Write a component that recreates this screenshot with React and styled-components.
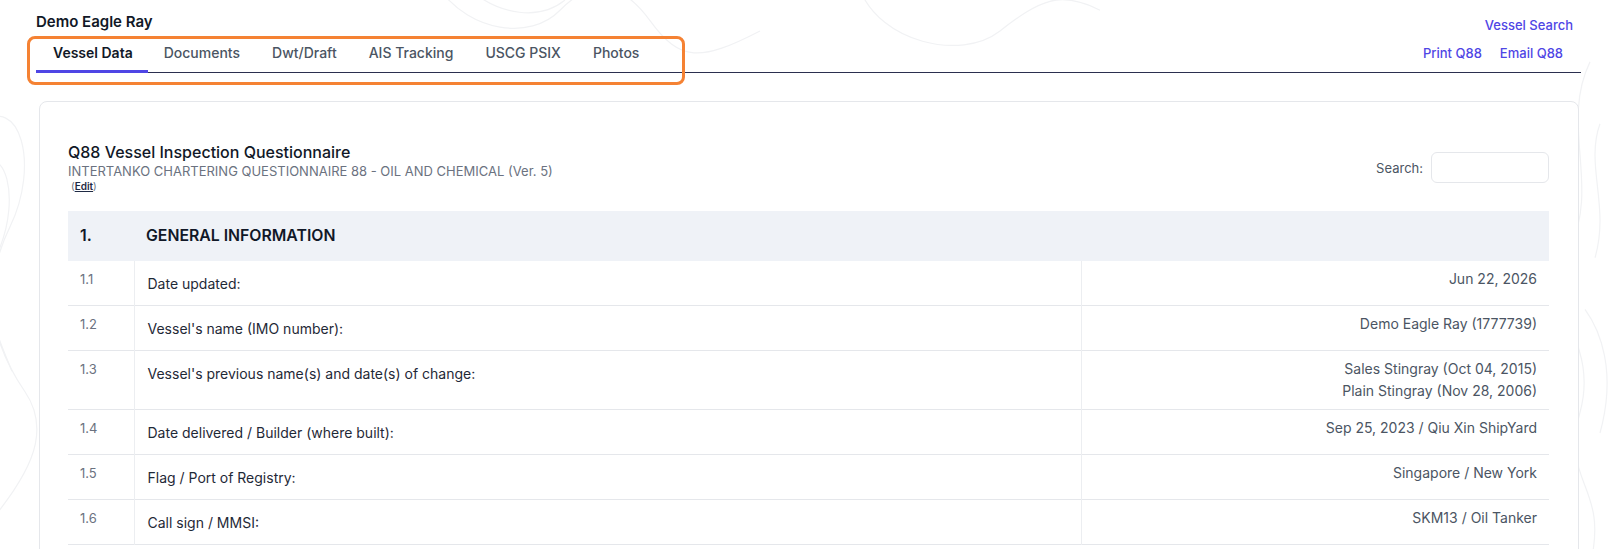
import React from "react";
import styled, { createGlobalStyle, css } from "styled-components";

const GlobalStyle = createGlobalStyle`
  html, body {
    margin: 0;
    padding: 0;
    background: #ffffff;
    font-family: Inter, "Noto Sans", "Liberation Sans", sans-serif;
    color: #111827;
  }
`;

const Page = styled.div`
  position: relative;
  min-height: 549px;
  padding: 12px 36px 0 36px;
  overflow: hidden;
`;

const Backdrop = styled.svg`
  position: absolute;
  inset: 0;
  width: 100%;
  height: 100%;
  pointer-events: none;
  z-index: 0;
`;

const Content = styled.div`
  position: relative;
  z-index: 1;
`;

const TopRow = styled.div`
  display: flex;
  justify-content: space-between;
  align-items: flex-start;
`;

const VesselName = styled.h1`
  margin: 0;
  font-size: 15px;
  line-height: 20px;
  font-weight: 600;
  color: #111827;
`;

const Link = styled.a`
  font-size: 13px;
  line-height: 20px;
  font-weight: 500;
  color: #4f46e5;
  text-decoration: none;
  cursor: pointer;
`;

const SearchLink = styled(Link)`
  margin-top: 3px;
  margin-right: 8px;
`;

const TabBar = styled.div`
  position: relative;
  display: flex;
  justify-content: space-between;
  align-items: flex-end;
  border-bottom: 1px solid #2b2f4f;
`;

const Tabs = styled.nav`
  display: flex;
`;

const Tab = styled.a`
  padding: 8px 16px 7px;
  font-size: 14px;
  line-height: 20px;
  font-weight: 500;
  color: #4b5563;
  border-bottom: 3px solid transparent;
  margin-bottom: -1px;
  cursor: pointer;

  ${({ active }) =>
    active &&
    css`
      padding-left: 17px;
      padding-right: 15px;
      color: #111827;
      font-weight: 600;
      border-bottom-color: #4f46e5;
    `};
`;

const Highlight = styled.div`
  position: absolute;
  top: 1px;
  left: -9px;
  width: 652px;
  height: 43px;
  border: 3px solid #f58233;
  border-radius: 8px;
  pointer-events: none;
`;

const Actions = styled.div`
  display: flex;
  gap: 18px;
  padding: 0 18px 9px 0;
`;

const Card = styled.section`
  margin: 28px 2px 0 3px;
  padding: 39px 29px 20px 28px;
  background: #ffffff;
  border: 1px solid #e5e7eb;
  border-radius: 8px;
`;

const CardHeader = styled.div`
  display: flex;
  justify-content: space-between;
  align-items: center;
  margin-bottom: 17px;
`;

const TitleBlock = styled.div`
  display: flex;
  flex-direction: column;
`;

const Title = styled.h2`
  margin: 0;
  font-size: 16px;
  line-height: 22px;
  font-weight: 500;
  color: #111827;
`;

const Subtitle = styled.div`
  font-size: 13px;
  line-height: 16px;
  color: #6b7280;
`;

const EditNote = styled.div`
  margin-left: 3px;
  font-size: 10px;
  line-height: 15px;
  color: #6b7280;

  a {
    color: #1f2a44;
    font-weight: 600;
    text-decoration: underline;
  }
`;

const SearchBox = styled.label`
  display: flex;
  align-items: center;
  gap: 8px;
  font-size: 13px;
  color: #4b5563;
`;

const SearchInput = styled.input`
  width: 118px;
  height: 31px;
  box-sizing: border-box;
  border: 1px solid #e5e7eb;
  border-radius: 6px;
  background: #ffffff;
  outline: none;
`;

const Table = styled.table`
  width: 100%;
  border-collapse: collapse;
  table-layout: fixed;
  font-size: 14px;
  line-height: 22px;
`;

const HeadCell = styled.th`
  text-align: left;
  padding: 15px 12px;
  background: #eff2f7;
  font-size: 15.8px;
  line-height: 20px;
  font-weight: 600;
  color: #111827;
`;

const Row = styled.tr`
  border-bottom: 1px solid #e5e7eb;
`;

const Cell = styled.td`
  vertical-align: top;
  padding: 7px 12px 7px;
  color: #4b5563;

  ${({ kind }) =>
    kind === "num" &&
    css`
      color: #6b7280;
      font-size: 13px;
    `};

  ${({ kind }) =>
    kind === "label" &&
    css`
      padding: 12px 13px 10px;
      color: #1f2937;
      border-left: 1px solid #eceef1;
      border-right: 1px solid #eceef1;
    `};

  ${({ kind }) =>
    kind === "value" &&
    css`
      text-align: right;
    `};
`;

const tabs = ["Vessel Data", "Documents", "Dwt/Draft", "AIS Tracking", "USCG PSIX", "Photos"];

const rows = [
  { num: "1.1", label: "Date updated:", value: ["Jun 22, 2026"] },
  { num: "1.2", label: "Vessel's name (IMO number):", value: ["Demo Eagle Ray (1777739)"] },
  {
    num: "1.3",
    label: "Vessel's previous name(s) and date(s) of change:",
    value: ["Sales Stingray (Oct 04, 2015)", "Plain Stingray (Nov 28, 2006)"],
  },
  { num: "1.4", label: "Date delivered / Builder (where built):", value: ["Sep 25, 2023 / Qiu Xin ShipYard"] },
  { num: "1.5", label: "Flag / Port of Registry:", value: ["Singapore / New York"] },
  { num: "1.6", label: "Call sign / MMSI:", value: ["SKM13 / Oil Tanker"] },
];

function Contours() {
  return (
    <Backdrop viewBox="0 0 1617 549" preserveAspectRatio="none">
      <g fill="none" stroke="#f1f2f4" strokeWidth="1.2">
        <path d="M-20 120 C 20 90, 40 160, 10 220 S -10 330, 25 380 S 10 480, -20 520" />
        <path d="M-20 160 C 5 140, 20 190, 0 240 S -5 320, 12 360" />
        <path d="M440 -10 C 470 30, 530 40, 560 10 S 620 -20, 650 20 S 700 60, 760 30" />
        <path d="M470 -10 C 500 15, 540 20, 565 0" />
        <path d="M860 -10 C 880 40, 960 60, 1000 30 S 1060 -10, 1100 10" />
        <path d="M1590 60 C 1560 120, 1600 180, 1570 240 S 1600 330, 1580 400 S 1610 470, 1590 549" />
        <path d="M1600 120 C 1585 160, 1610 200, 1595 250" />
        <path d="M1585 300 C 1600 320, 1617 360, 1600 420" />
      </g>
    </Backdrop>
  );
}

export default function App() {
  return (
    <>
      <GlobalStyle />
      <Page>
        <Contours />
        <Content>
          <TopRow>
            <VesselName>Demo Eagle Ray</VesselName>
            <SearchLink>Vessel Search</SearchLink>
          </TopRow>

          <TabBar>
            <Tabs>
              {tabs.map((t, i) => (
                <Tab key={t} active={i === 0}>
                  {t}
                </Tab>
              ))}
            </Tabs>
            <Actions>
              <Link>Print Q88</Link>
              <Link>Email Q88</Link>
            </Actions>
            <Highlight />
          </TabBar>

          <Card>
            <CardHeader>
              <TitleBlock>
                <Title>Q88 Vessel Inspection Questionnaire</Title>
                <Subtitle>INTERTANKO CHARTERING QUESTIONNAIRE 88 - OIL AND CHEMICAL (Ver. 5)</Subtitle>
                <EditNote>
                  (<a>Edit</a>)
                </EditNote>
              </TitleBlock>
              <SearchBox>
                Search:
                <SearchInput type="text" />
              </SearchBox>
            </CardHeader>

            <Table>
              <colgroup>
                <col style={{ width: 66 }} />
                <col />
                <col style={{ width: 467 }} />
              </colgroup>
              <thead>
                <tr>
                  <HeadCell>1.</HeadCell>
                  <HeadCell colSpan={2}>GENERAL INFORMATION</HeadCell>
                </tr>
              </thead>
              <tbody>
                {rows.map((r) => (
                  <Row key={r.num}>
                    <Cell kind="num">{r.num}</Cell>
                    <Cell kind="label">{r.label}</Cell>
                    <Cell kind="value">
                      {r.value.map((v) => (
                        <div key={v}>{v}</div>
                      ))}
                    </Cell>
                  </Row>
                ))}
              </tbody>
            </Table>
          </Card>
        </Content>
      </Page>
    </>
  );
}
